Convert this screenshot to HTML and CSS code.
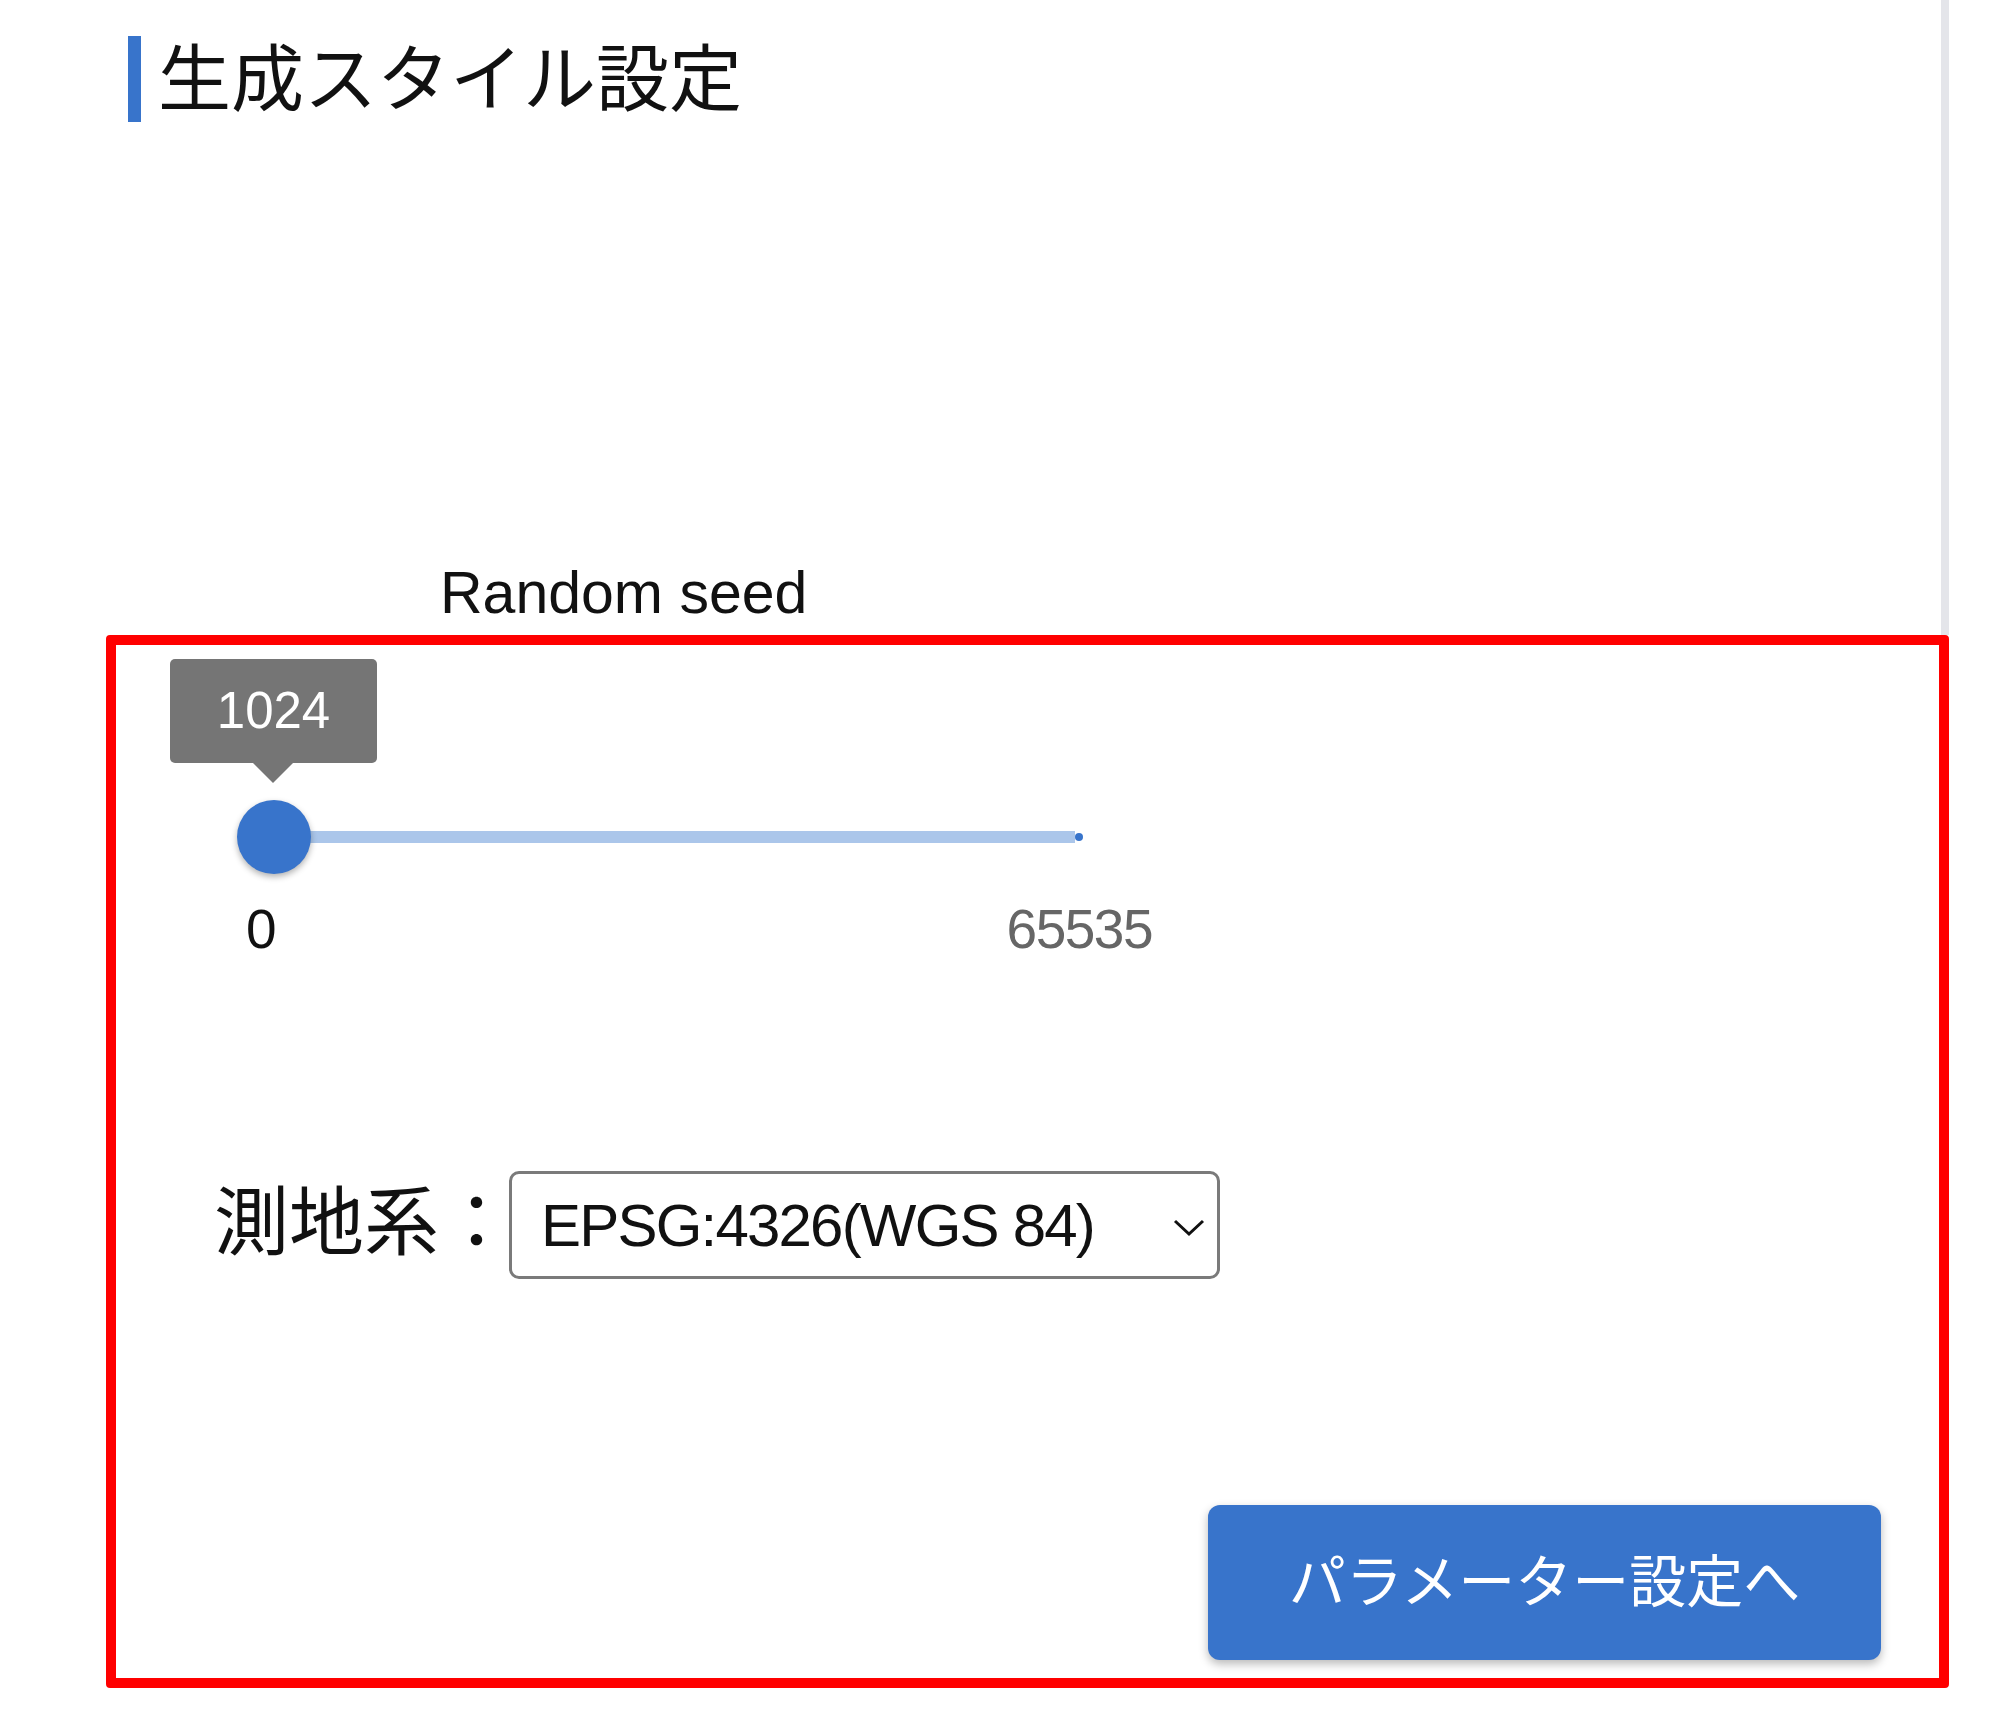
FILE: index.html
```html
<!DOCTYPE html>
<html lang="ja">
<head>
<meta charset="utf-8">
<title>生成スタイル設定</title>
<link rel="stylesheet" href="styles.css">
</head>
<body>
<div class="top">
  <div class="title-row">
    <span class="title-bar"></span>
    <h1 class="title">生成スタイル設定</h1>
  </div>
  <div class="seed-label">Random seed</div>
</div>
<div class="frame">
  <div class="seed-block">
    <div class="bubble">1024</div>
    <div class="track-row">
      <span class="thumb"></span>
      <span class="track"></span>
      <span class="end-dot"></span>
    </div>
    <div class="ticks">
      <span class="tick-min">0</span>
      <span class="tick-max">65535</span>
    </div>
  </div>
  <div class="crs-row">
    <span class="crs-label">測地系：</span>
    <div class="select">
      <span class="select-value">EPSG:4326(WGS 84)</span>
      <svg class="chevron" width="32" height="18" viewBox="0 0 32 18"><path d="M2 2 L16 15 L30 2" fill="none" stroke="#111" stroke-width="3"/></svg>
    </div>
  </div>
  <div class="btn-row">
    <button class="next-btn">パラメーター設定へ</button>
  </div>
</div>
</body>
</html>
```
FILE: styles.css
```css
html, body {
  margin: 0;
  padding: 0;
  background: #ffffff;
}
body {
  width: 2006px;
  font-family: "Liberation Sans", "Noto Sans CJK JP", sans-serif;
  color: #111;
}
.top {
  box-sizing: border-box;
  width: 1949px;
  height: 635px;
  border-right: 8px solid #e4e5ea;
  padding-top: 36px;
  display: flex;
  flex-direction: column;
}
.title-row {
  display: flex;
  align-items: center;
  margin-left: 128px;
  height: 86px;
}
.title-bar {
  width: 13px;
  height: 86px;
  background: #3874cb;
}
.title {
  margin: -12px 0 0 17px;
  font-family: "Noto Sans CJK JP", sans-serif;
  font-weight: 400;
  font-size: 73px;
  line-height: 86px;
  color: #111;
}
.seed-label {
  margin-top: 442px;
  margin-left: 440px;
  font-size: 59px;
  line-height: 58px;
  color: #111;
}
.frame {
  box-sizing: border-box;
  width: 1843px;
  margin-left: 106px;
  border: 10px solid #ff0000;
  border-radius: 4px;
  padding-bottom: 18px;
}
.seed-block {
  padding-top: 14px;
  padding-left: 54px;
}
.bubble {
  position: relative;
  width: 207px;
  height: 104px;
  background: #757575;
  border-radius: 5px;
  color: #fff;
  font-size: 51px;
  line-height: 104px;
  text-align: center;
}
.bubble::after {
  content: "";
  position: absolute;
  left: 83px;
  top: 104px;
  border-left: 20px solid transparent;
  border-right: 20px solid transparent;
  border-top: 20px solid #757575;
}
.track-row {
  display: flex;
  align-items: center;
  margin-top: 37px;
  margin-left: 67px;
  height: 74px;
}
.thumb {
  position: relative;
  z-index: 1;
  width: 74px;
  height: 74px;
  border-radius: 50%;
  background: #3874cb;
  box-shadow: 0 3px 6px rgba(0, 0, 0, 0.3);
  flex: none;
}
.track {
  width: 801px;
  height: 12px;
  margin-left: -37px;
  background: #abc6ea;
  flex: none;
}
.end-dot {
  width: 8px;
  height: 8px;
  border-radius: 50%;
  background: #3874cb;
  flex: none;
}
.ticks {
  display: flex;
  justify-content: space-between;
  width: 906px;
  margin-top: 28px;
  margin-left: 76px;
  font-size: 55px;
  line-height: 55px;
}
.tick-min {
  color: #111;
}
.tick-max {
  color: #666;
  letter-spacing: -1.5px;
}
.crs-row {
  display: flex;
  align-items: center;
  margin-top: 214px;
  margin-left: 98px;
}
.crs-label {
  flex: none;
  white-space: nowrap;
  font-family: "Noto Sans CJK JP", sans-serif;
  font-size: 75px;
  line-height: 1;
  color: #111;
  width: 295px;
  margin-bottom: 18px;
}
.select {
  flex: none;
  box-sizing: border-box;
  width: 711px;
  height: 108px;
  border: 3px solid #7a7a7a;
  border-radius: 10px;
  display: flex;
  align-items: center;
  justify-content: space-between;
  padding: 0 12px 0 29px;
}
.select-value {
  font-size: 60px;
  letter-spacing: -1.8px;
  color: #111;
}
.chevron {
  display: block;
  margin-top: 6px;
}
.btn-row {
  display: flex;
  justify-content: flex-end;
  margin-top: 226px;
  padding-right: 58px;
}
.next-btn {
  width: 673px;
  height: 155px;
  border: none;
  border-radius: 12px;
  background: #3874cb;
  color: #fff;
  font-family: "Noto Sans CJK JP", sans-serif;
  font-size: 57px;
  box-shadow: 0 4px 10px rgba(0, 0, 0, 0.28);
  padding: 0 0 12px 0;
}
```
